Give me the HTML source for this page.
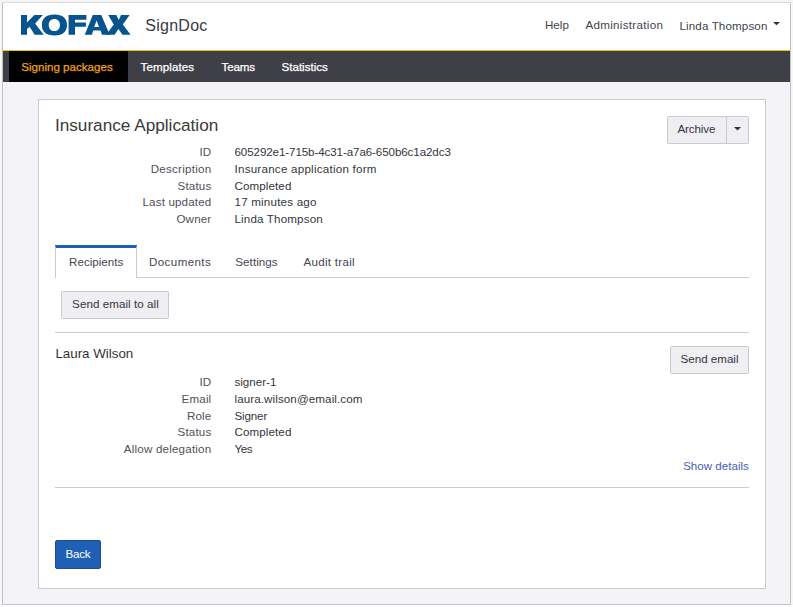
<!DOCTYPE html>
<html><head><meta charset="utf-8">
<style>
*{box-sizing:border-box;margin:0;padding:0}
html,body{width:793px;height:607px;overflow:hidden;background:#fefefe;font-family:"Liberation Sans",sans-serif;color:#333}
div,svg{position:absolute}
.t{white-space:nowrap;line-height:1}
.nt{-webkit-text-stroke:.25px currentColor}
.btn{background:#eeeef3;border:1px solid #c9c9ce;border-radius:1.5px}
</style></head><body>
<div style="left:0;top:0;width:793px;height:2px;background:#f4f4f4"></div>
<div style="left:0;top:2px;width:2px;height:603px;background:linear-gradient(90deg,#fcfcfc,#f0f0f0)"></div>
<div style="left:791px;top:2px;width:2px;height:603px;background:#f6f6f6"></div>
<div style="left:2px;top:2px;width:789px;height:603px;border:1px solid #c2c2c2;border-top-color:#dcdcdc;background:#f3f3f8"></div>
<div style="left:3px;top:3px;width:787px;height:47px;background:#fff"></div>
<div style="left:3px;top:50px;width:787px;height:1px;background:#f6bf00"></div>
<div style="left:3px;top:51px;width:787px;height:31px;background:#3f3f47"></div>
<div style="left:9px;top:51px;width:119px;height:31px;background:#000"></div>

<svg style="left:0;top:0" width="140" height="48" viewBox="0 0 140 48">
  <g fill="#06548e">
    <polygon points="21,15 27,15 27,22.5 34.3,15 42.9,15 35.1,23.4 43.7,34.8 34.7,34.8 29.6,26.8 27,29.1 27,34.8 21,34.8"/>
    <path fill-rule="evenodd" d="M41.90,24.90 C41.90,17.97 46.17,14.40 54.45,14.40 C62.73,14.40 67.00,17.97 67.00,24.90 C67.00,31.83 62.73,35.40 54.45,35.40 C46.17,35.40 41.90,31.83 41.90,24.90 Z M48.75,25.00 C48.75,21.22 50.88,18.90 54.35,18.90 C57.82,18.90 59.95,21.22 59.95,25.00 C59.95,28.78 57.82,31.10 54.35,31.10 C50.88,31.10 48.75,28.78 48.75,25.00 Z"/>
    <polygon points="68.6,15 86.4,15 86.4,19.7 75,19.7 75,22.4 85.9,22.4 85.9,26.8 75,26.8 75,34.8 68.6,34.8"/>
    <path fill-rule="evenodd" d="M84.75,34.8 L92.8,15 L101.3,15 L109.7,34.8 L102,34.8 L100.6,30.5 L93.3,30.5 L91.9,34.8 Z M96.6,20.4 L94.2,27 L99.1,27 Z"/>
    <polygon points="108.2,15 116.3,15 118.8,19.9 121,15 129.7,15 122.8,24.5 130.6,34.8 122.5,34.8 118.4,29 114.6,34.8 106.2,34.8 113.8,24.5"/>
  </g>
</svg>
<div class="t" style="top:18px;font-size:16px;color:#3a3a44;letter-spacing:0.25px;left:145.3px;">SignDoc</div>
<div class="t" style="top:19px;font-size:11.6px;color:#43434d;left:545px;">Help</div>
<div class="t" style="top:19px;font-size:11.6px;color:#43434d;letter-spacing:0.3px;left:585.5px;">Administration</div>
<div class="t" style="top:20px;font-size:11.6px;color:#43434d;letter-spacing:0.13px;left:679.5px;">Linda Thompson</div>
<svg style="left:773px;top:21.8px" width="8" height="5" viewBox="0 0 8 5"><polygon points="0,0 7,0 3.5,3.3" fill="#333"/></svg>
<div class="t nt" style="top:61px;font-size:11.6px;color:#eda21a;left:21.2px;">Signing packages</div>
<div class="t nt" style="top:61px;font-size:11.6px;color:#fff;letter-spacing:0.08px;left:140.6px;">Templates</div>
<div class="t nt" style="top:61px;font-size:11.6px;color:#fff;letter-spacing:-0.2px;left:221.6px;">Teams</div>
<div class="t nt" style="top:61px;font-size:11.6px;color:#fff;left:281.5px;">Statistics</div>
<div style="left:38px;top:99px;width:728px;height:490px;background:#fff;border:1px solid #ccccd0"></div>
<div class="t" style="top:117px;font-size:17.2px;color:#3a3a3a;left:54.9px;">Insurance Application</div>
<div class="btn" style="left:667px;top:116px;width:82px;height:28px"></div>
<div style="left:726px;top:117px;width:1px;height:26px;background:#c9c9ce"></div>
<div class="t" style="top:123px;font-size:11.6px;color:#35353e;letter-spacing:-0.1px;left:677.4px;">Archive</div>
<svg style="left:734px;top:127px" width="8" height="5" viewBox="0 0 8 5"><polygon points="0,0 7,0 3.5,3.6" fill="#333"/></svg>
<div class="t" style="top:146px;font-size:11.6px;color:#50505a;left:-88.80000000000001px;width:300px;text-align:right;">ID</div>
<div class="t" style="top:146px;font-size:11.6px;color:#35353e;letter-spacing:-0.1px;left:234.5px;">605292e1-715b-4c31-a7a6-650b6c1a2dc3</div>
<div class="t" style="top:163px;font-size:11.6px;color:#50505a;letter-spacing:0.25px;left:-88.55000000000001px;width:300px;text-align:right;">Description</div>
<div class="t" style="top:163px;font-size:11.6px;color:#35353e;letter-spacing:0.24px;left:234.5px;">Insurance application form</div>
<div class="t" style="top:180px;font-size:11.6px;color:#50505a;letter-spacing:0.15px;left:-88.65px;width:300px;text-align:right;">Status</div>
<div class="t" style="top:180px;font-size:11.6px;color:#35353e;letter-spacing:0.1px;left:234.5px;">Completed</div>
<div class="t" style="top:196px;font-size:11.6px;color:#50505a;letter-spacing:0.15px;left:-88.65px;width:300px;text-align:right;">Last updated</div>
<div class="t" style="top:196px;font-size:11.6px;color:#35353e;letter-spacing:0.2px;left:234.5px;">17 minutes ago</div>
<div class="t" style="top:213px;font-size:11.6px;color:#50505a;letter-spacing:0.15px;left:-88.65px;width:300px;text-align:right;">Owner</div>
<div class="t" style="top:213px;font-size:11.6px;color:#35353e;letter-spacing:0.16px;left:234.5px;">Linda Thompson</div>
<div style="left:55px;top:277px;width:694px;height:1px;background:#ccccd0"></div>
<div style="left:55px;top:245px;width:82px;height:33px;background:#fff;border:1px solid #ccccd0;border-bottom:none;border-top:3px solid #1f5fb5"></div>
<div class="t" style="top:256px;font-size:11.6px;color:#45454f;left:69.1px;">Recipients</div>
<div class="t" style="top:256px;font-size:11.6px;color:#45454f;letter-spacing:0.39px;left:149px;">Documents</div>
<div class="t" style="top:256px;font-size:11.6px;color:#45454f;letter-spacing:0.06px;left:235.3px;">Settings</div>
<div class="t" style="top:256px;font-size:11.6px;color:#45454f;letter-spacing:0.29px;left:303.4px;">Audit trail</div>
<div class="btn" style="left:61px;top:291px;width:108px;height:28px"></div>
<div class="t" style="top:298px;font-size:11.6px;color:#35353e;letter-spacing:0.06px;left:72.1px;">Send email to all</div>
<div style="left:55px;top:332px;width:694px;height:1px;background:#ccccd0"></div>
<div class="t" style="top:347px;font-size:13.35px;color:#333;left:55.4px;">Laura Wilson</div>
<div class="btn" style="left:670px;top:346px;width:79px;height:27.5px"></div>
<div class="t" style="top:353px;font-size:11.6px;color:#35353e;left:680.5px;">Send email</div>
<div class="t" style="top:376px;font-size:11.6px;color:#50505a;left:-88.80000000000001px;width:300px;text-align:right;">ID</div>
<div class="t" style="top:376px;font-size:11.6px;color:#35353e;left:234.5px;">signer-1</div>
<div class="t" style="top:393px;font-size:11.6px;color:#50505a;letter-spacing:0.15px;left:-88.65px;width:300px;text-align:right;">Email</div>
<div class="t" style="top:393px;font-size:11.6px;color:#35353e;letter-spacing:0.1px;left:234.5px;">laura.wilson@email.com</div>
<div class="t" style="top:410px;font-size:11.6px;color:#50505a;letter-spacing:0.15px;left:-88.65px;width:300px;text-align:right;">Role</div>
<div class="t" style="top:410px;font-size:11.6px;color:#35353e;letter-spacing:-0.15px;left:234.5px;">Signer</div>
<div class="t" style="top:426px;font-size:11.6px;color:#50505a;letter-spacing:0.15px;left:-88.65px;width:300px;text-align:right;">Status</div>
<div class="t" style="top:426px;font-size:11.6px;color:#35353e;letter-spacing:0.1px;left:234.5px;">Completed</div>
<div class="t" style="top:443px;font-size:11.6px;color:#50505a;letter-spacing:0.2px;left:-88.60000000000001px;width:300px;text-align:right;">Allow delegation</div>
<div class="t" style="top:443px;font-size:11.6px;color:#35353e;letter-spacing:-0.4px;left:234.5px;">Yes</div>
<div class="t" style="top:460px;font-size:11.6px;color:#4660b8;left:448.9px;width:300px;text-align:right;">Show details</div>
<div style="left:55px;top:487px;width:694px;height:1px;background:#ccccd0"></div>
<div style="left:55px;top:540px;width:46px;height:28.5px;background:#1f5fb5;border:1px solid #1a4f99;border-radius:2px"></div>
<div class="t" style="top:548px;font-size:11.6px;color:#fff;letter-spacing:-0.2px;left:65.4px;">Back</div>
</body></html>
